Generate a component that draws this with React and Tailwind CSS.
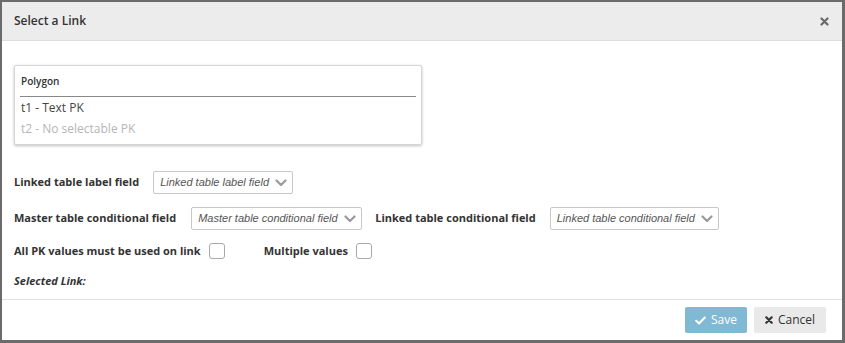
import React from "react";

function Chevron() {
  return (
    <svg width="12" height="8" viewBox="0 0 12 8" className="shrink-0">
      <path d="M1.5 1.5 L6 6 L10.5 1.5" fill="none" stroke="#9a9a9a" strokeWidth="2.2" strokeLinecap="round" strokeLinejoin="round" />
    </svg>
  );
}

function Select({ text, w }) {
  return (
    <div className={`flex h-[23px] items-center justify-between rounded-[2px] border border-[#c8c8c8] bg-white pl-[6px] pr-[5px] ${w}`}>
      <span className="italic text-[11px] text-[#555] font-['Liberation_Sans',Arial,sans-serif] whitespace-nowrap">{text}</span>
      <Chevron />
    </div>
  );
}

function Checkbox() {
  return <div className="h-[16px] w-[16px] rounded-[3px] border border-[#a9a9a9] bg-white" />;
}

export default function App() {
  return (
    <div className="h-[343px] w-[845px] bg-[#6b6b6b] pl-[2px] pt-[2px] font-['Open_Sans',sans-serif]">
      <div className="flex h-[338px] w-[840px] flex-col bg-white">
        <div className="flex h-[39px] items-center justify-between border-b border-[#dcdcdc] bg-[#ececec] pl-[12px] pr-[13px]">
          <span className="text-[12px] font-semibold text-[#333]">Select a Link</span>
          <svg width="9" height="9" viewBox="0 0 9 9">
            <path d="M1.5 1.5 L7.5 7.5 M7.5 1.5 L1.5 7.5" stroke="#6a6a6a" strokeWidth="2.2" strokeLinecap="round" />
          </svg>
        </div>
        <div className="flex flex-1 flex-col pl-[12px] pt-[24px]">
          <div className="h-[80px] w-[408px] rounded-[2px] border border-[#d6d6d6] bg-white px-[5px] shadow-[0_1px_3px_rgba(0,0,0,0.25)]">
            <div className="flex h-[31px] items-center border-b border-[#888] pl-[1px] text-[10px] font-semibold text-[#333]">Polygon</div>
            <div className="pl-[1px] text-[12px] leading-[21px] text-[#444]">t1 - Text PK</div>
            <div className="pl-[1px] text-[12px] leading-[21px] text-[#b5b5b5]">t2 - No selectable PK</div>
          </div>
          <div className="mt-[26px] flex items-center">
            <span className="text-[11px] font-bold text-[#333]">Linked table label field</span>
            <div className="ml-[14px]"><Select text="Linked table label field" w="w-[140px]" /></div>
          </div>
          <div className="mt-[13px] flex items-center">
            <span className="text-[11px] font-bold text-[#333]">Master table conditional field</span>
            <div className="ml-[15px]"><Select text="Master table conditional field" w="w-[171px]" /></div>
            <span className="ml-[13px] text-[11px] font-bold text-[#333]">Linked table conditional field</span>
            <div className="ml-[14px]"><Select text="Linked table conditional field" w="w-[169px]" /></div>
          </div>
          <div className="mt-[13px] flex items-center">
            <span className="text-[11px] font-bold text-[#333]">All PK values must be used on link</span>
            <div className="ml-[8px]"><Checkbox /></div>
            <span className="ml-[39px] text-[11px] font-bold text-[#333]">Multiple values</span>
            <div className="ml-[8px]"><Checkbox /></div>
          </div>
          <div className="mt-[13px] text-[11px] font-bold italic text-[#333]">Selected Link:</div>
        </div>
        <div className="flex h-[41px] items-center justify-end gap-[7px] border-t border-[#e2e2e2] pr-[16px]">
          <button className="flex h-[26px] w-[62px] items-center justify-center gap-[5px] rounded-[2px] bg-[#80b9d4] text-[12px] text-white">
            <svg width="11" height="9" viewBox="0 0 11 9">
              <path d="M1.2 4.8 L4 7.5 L9.8 1.5" fill="none" stroke="white" strokeWidth="2" strokeLinecap="round" strokeLinejoin="round" />
            </svg>
            Save
          </button>
          <button className="flex h-[26px] w-[72px] items-center justify-center gap-[5px] rounded-[2px] bg-[#e9e9e9] text-[12px] text-[#333]">
            <svg width="8" height="8" viewBox="0 0 8 8">
              <path d="M1.3 1.3 L6.7 6.7 M6.7 1.3 L1.3 6.7" stroke="#333" strokeWidth="2.2" strokeLinecap="round" />
            </svg>
            Cancel
          </button>
        </div>
      </div>
    </div>
  );
}
